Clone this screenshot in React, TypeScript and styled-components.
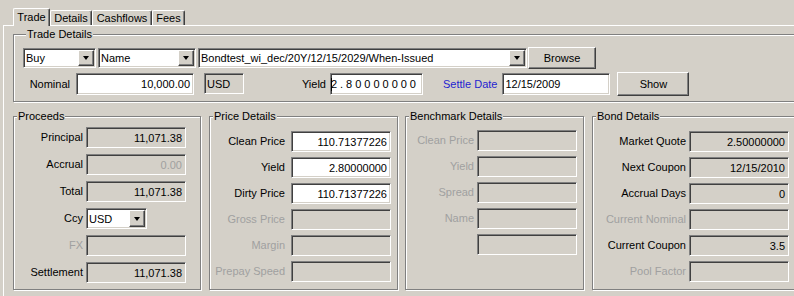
import React from "react";
import styled, { createGlobalStyle } from "styled-components";

const Global = createGlobalStyle`
  html, body { margin: 0; padding: 0; background: #d4d0c8; overflow: hidden; }
  body { font-family: "Liberation Sans", Arial, sans-serif; font-size: 11px; color: #000; }
  * { box-sizing: border-box; }
`;

const Window = styled.div`
  width: 794px;
  height: 296px;
  overflow: hidden;
  padding-top: 8px;
`;

const TabStrip = styled.div`
  display: flex;
  align-items: flex-end;
  height: 17px;
  padding-left: 13px;
  position: relative;
  z-index: 1;
`;

const Tab = styled.div<{ $w: number; $active?: boolean }>`
  width: ${(p) => p.$w}px;
  height: ${(p) => (p.$active ? 18 : 15)}px;
  margin-bottom: ${(p) => (p.$active ? -1 : 0)}px;
  padding-top: ${(p) => (p.$active ? 2 : 1)}px;
  line-height: 13px;
  text-align: center;
  background: #d4d0c8;
  border-top: 1px solid #fff;
  border-left: 1px solid #fff;
  border-right: 1px solid #404040;
  box-shadow: inset -1px 0 0 #808080;
  border-radius: 2px 2px 0 0;
  white-space: nowrap;
`;

const Panel = styled.div`
  margin-left: 3px;
  width: 840px;
  height: 280px;
  border-top: 1px solid #fff;
  border-left: 1px solid #fff;
  padding: 2px 0 0 9px;
`;

const Group = styled.fieldset<{ $w: number; $pad?: string }>`
  margin: 0;
  min-width: 0;
  width: ${(p) => p.$w}px;
  padding: ${(p) => p.$pad || "0"};
  border: 1px solid #808080;
  box-shadow: inset 1px 1px 0 #fff, 1px 1px 0 #fff;
`;

const Legend = styled.legend`
  padding: 0 1px;
  margin-left: 3px;
  height: 13px;
  line-height: 13px;
  background: #d4d0c8;
`;

const Row = styled.div<{ $mt?: number }>`
  display: flex;
  align-items: flex-start;
  margin-top: ${(p) => p.$mt || 0}px;
`;

const Label = styled.div<{ $w?: number; $ml?: number; $color?: string; $align?: string }>`
  width: ${(p) => (p.$w ? `${p.$w}px` : "auto")};
  margin-left: ${(p) => p.$ml || 0}px;
  line-height: 22px;
  text-align: ${(p) => p.$align || "right"};
  color: ${(p) => p.$color || "#000"};
  white-space: nowrap;
`;

const Field = styled.div<{ $w?: number; $h?: number; $ml?: number; $white?: boolean; $align?: string; $dim?: boolean; $spacing?: number }>`
  width: ${(p) => (p.$w ? `${p.$w}px` : "100%")};
  height: ${(p) => p.$h || 21}px;
  margin-left: ${(p) => p.$ml || 0}px;
  background: ${(p) => (p.$white ? "#fff" : "#d4d0c8")};
  border: 1px solid;
  border-color: #808080 #fff #fff #808080;
  box-shadow: inset 1px 1px 0 #404040, inset -1px -1px 0 #d4d0c8;
  display: flex;
  align-items: center;
  justify-content: ${(p) => (p.$align === "left" ? "flex-start" : "flex-end")};
  padding: 0 ${(p) => (p.$align === "left" ? 0 : 3)}px 0 ${(p) => (p.$align === "left" ? 2 : 0)}px;
  color: ${(p) => (p.$dim ? "#a0a0a0" : "#000")};
  letter-spacing: ${(p) => p.$spacing || 0}px;
  white-space: nowrap;
  overflow: hidden;
`;

const Caret = styled.span`
  display: inline-block;
  width: 1px;
  height: 13px;
  background: #000;
  margin-right: -1px;
`;

const Combo = styled.div<{ $w: number; $h?: number; $ml?: number }>`
  width: ${(p) => p.$w}px;
  height: ${(p) => p.$h || 20}px;
  margin-left: ${(p) => p.$ml || 0}px;
  margin-top: ${(p) => (p.$h ? 0 : 1)}px;
  background: #fff;
  border: 1px solid;
  border-color: #808080 #fff #fff #808080;
  box-shadow: inset 1px 1px 0 #404040, inset -1px -1px 0 #d4d0c8;
  display: flex;
  align-items: center;
  padding: 1px 1px 1px 2px;
  white-space: nowrap;
`;

const ComboText = styled.span`
  flex: 1;
  overflow: hidden;
`;

const DropButton = styled.div`
  width: 16px;
  height: 100%;
  background: #d4d0c8;
  border: 1px solid;
  border-color: #fff #404040 #404040 #fff;
  box-shadow: inset -1px -1px 0 #808080;
  display: flex;
  align-items: center;
  justify-content: center;
  flex: none;
`;

const Arrow = styled.span`
  width: 0;
  height: 0;
  border-left: 3.5px solid transparent;
  border-right: 3.5px solid transparent;
  border-top: 4px solid #000;
  margin-left: -1px;
`;

const Button = styled.div<{ $w: number; $h: number; $ml?: number; $mt?: number }>`
  width: ${(p) => p.$w}px;
  height: ${(p) => p.$h}px;
  margin-left: ${(p) => p.$ml || 0}px;
  margin-top: ${(p) => p.$mt || 0}px;
  background: #d4d0c8;
  border: 1px solid;
  border-color: #fff #404040 #404040 #fff;
  box-shadow: inset -1px -1px 0 #808080;
  display: flex;
  align-items: center;
  justify-content: center;
`;

const LowerRow = styled.div`
  display: flex;
  margin-top: 8px;
  height: 180px;
`;

const Grid = styled.div<{ $label: number; $gap: number; $rowGap: number; $top: number; $ml: number }>`
  display: grid;
  grid-template-columns: ${(p) => p.$label}px 100px;
  column-gap: ${(p) => p.$gap}px;
  row-gap: ${(p) => p.$rowGap}px;
  grid-auto-rows: 21px;
  padding-top: ${(p) => p.$top}px;
  margin-left: ${(p) => p.$ml}px;
`;

const GridLabel = styled.div<{ $dim?: boolean }>`
  line-height: 21px;
  text-align: right;
  white-space: nowrap;
  color: ${(p) => (p.$dim ? "#a0a0a0" : "#000")};
`;

type Item = { label: string; value?: string; dim?: boolean; dimValue?: boolean; white?: boolean; combo?: boolean };

const Box = ({ items, label, gap, rowGap, top }: { items: Item[]; label: number; gap: number; rowGap: number; top: number }) => (
  <Grid $label={label} $gap={gap} $rowGap={rowGap} $top={top} $ml={0}>
    {items.map((it, i) => (
      <React.Fragment key={i}>
        <GridLabel $dim={it.dim}>{it.label}</GridLabel>
        {it.combo ? (
          <Combo $w={61} $h={21}>
            <ComboText>{it.value}</ComboText>
            <DropButton>
              <Arrow />
            </DropButton>
          </Combo>
        ) : (
          <Field $white={it.white} $dim={it.dimValue}>
            {it.value}
          </Field>
        )}
      </React.Fragment>
    ))}
  </Grid>
);

const proceeds: Item[] = [
  { label: "Principal", value: "11,071.38" },
  { label: "Accrual", value: "0.00", dimValue: true },
  { label: "Total", value: "11,071.38" },
  { label: "Ccy", value: "USD", combo: true },
  { label: "FX", dim: true },
  { label: "Settlement", value: "11,071.38" },
];

const price: Item[] = [
  { label: "Clean Price", value: "110.71377226", white: true },
  { label: "Yield", value: "2.80000000", white: true },
  { label: "Dirty Price", value: "110.71377226", white: true },
  { label: "Gross Price", dim: true },
  { label: "Margin", dim: true },
  { label: "Prepay Speed", dim: true },
];

const bench: Item[] = [
  { label: "Clean Price", dim: true },
  { label: "Yield", dim: true },
  { label: "Spread", dim: true },
  { label: "Name", dim: true },
  { label: "", dim: true },
];

const bond: Item[] = [
  { label: "Market Quote", value: "2.50000000" },
  { label: "Next Coupon", value: "12/15/2010" },
  { label: "Accrual Days", value: "0" },
  { label: "Current Nominal", dim: true },
  { label: "Current Coupon", value: "3.5" },
  { label: "Pool Factor", dim: true },
];

export default function App() {
  return (
    <Window>
      <Global />
      <TabStrip>
        <Tab $w={37} $active>Trade</Tab>
        <Tab $w={42}>Details</Tab>
        <Tab $w={60}>Cashflows</Tab>
        <Tab $w={33}>Fees</Tab>
      </TabStrip>
      <Panel>
        <Group $w={810} $pad="6px 0 5px 9px">
          <Legend>Trade Details</Legend>
          <Row>
            <Combo $w={73}>
              <ComboText>Buy</ComboText>
              <DropButton><Arrow /></DropButton>
            </Combo>
            <Combo $w={98} $ml={2}>
              <ComboText>Name</ComboText>
              <DropButton><Arrow /></DropButton>
            </Combo>
            <Combo $w={329} $ml={2}>
              <ComboText>Bondtest_wi_dec/20Y/12/15/2029/When-Issued</ComboText>
              <DropButton><Arrow /></DropButton>
            </Combo>
            <Button $w={68} $h={22} $ml={1}>Browse</Button>
          </Row>
          <Row $mt={4}>
            <Label $w={47}>Nominal</Label>
            <Field $w={118} $h={22} $ml={6} $white>10,000.00</Field>
            <Field $w={40} $ml={10} $align="left">USD</Field>
            <Label $w={82}>Yield</Label>
            <Field $w={93} $h={22} $ml={4} $white $spacing={3}>
              <Caret />2.80000000
            </Field>
            <Label $ml={20} $color="#1f1fd0" $align="left">Settle Date</Label>
            <Field $w={108} $h={22} $ml={5} $white $align="left">12/15/2009</Field>
            <Button $w={72} $h={24} $ml={7} $mt={-1}>Show</Button>
          </Row>
        </Group>
        <LowerRow>
          <Group $w={188}>
            <Legend>Proceeds</Legend>
            <Box items={proceeds} label={69} gap={3} rowGap={6} top={4} />
          </Group>
          <Group $w={189} style={{ marginLeft: 8 }}>
            <Legend>Price Details</Legend>
            <Box items={price} label={75} gap={6} rowGap={5} top={8} />
          </Group>
          <Group $w={179} style={{ marginLeft: 7 }}>
            <Legend>Benchmark Details</Legend>
            <Box items={bench} label={68} gap={3} rowGap={5} top={7} />
          </Group>
          <Group $w={210} style={{ marginLeft: 8 }}>
            <Legend>Bond Details</Legend>
            <Box items={bond} label={93} gap={3} rowGap={5} top={8} />
          </Group>
        </LowerRow>
      </Panel>
    </Window>
  );
}
